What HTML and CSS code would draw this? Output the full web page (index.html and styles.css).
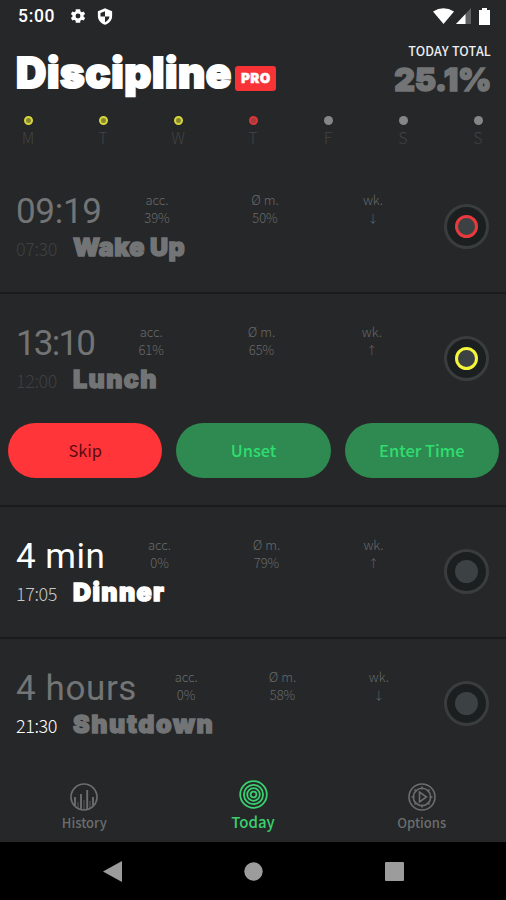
FILE: index.html
```html
<!DOCTYPE html>
<html lang="en">
<head>
<meta charset="utf-8">
<title>Discipline</title>
<link rel="stylesheet" href="styles.css">
</head>
<body>
<div class="phone">
  <div class="status">
    <span class="clock">5:00</span>
    <svg class="gear" width="18" height="18" viewBox="0 0 24 24" fill="#fff"><path d="M19.4 13a7.500 7.500 0 0 0 0-2l2.100-1.600-2-3.500-2.500 1a7.500 7.500 0 0 0-1.700-1L14.900 3H9.100l-.4 2.900a7.500 7.500 0 0 0-1.700 1l-2.500-1-2 3.500L4.600 11a7.500 7.500 0 0 0 0 2l-2.100 1.600 2 3.500 2.500-1a7.500 7.500 0 0 0 1.700 1l.4 2.900h5.800l.4-2.900a7.500 7.500 0 0 0 1.700-1l2.500 1 2-3.500zM12 15.300a3.300 3.300 0 1 1 0-6.600 3.300 3.300 0 0 1 0 6.600z"/></svg>
    <svg class="shield" width="18" height="19" viewBox="0 0 24 24"><path fill="#fff" d="M12 1 2.500 5v6c0 6 4 10.500 9.500 12 5.500-1.500 9.500-6 9.500-12V5z"/><path fill="#252728" d="M12 5v7h6c-.5 3.500-3 6.500-6 7.600V12H6V7.200z"/></svg>
    <span class="grow"></span>
    <svg width="21" height="16" viewBox="0 0 21 16"><path fill="#fff" d="M0 3.500Q10.500-3 21 3.500L10.500 16z"/></svg>
    <svg class="signal" width="15" height="16" viewBox="0 0 15 16"><path fill="#606162" d="M15 0v16H0z"/><path fill="#fff" d="M9.500 5.900V16H0z"/></svg>
    <svg class="battery" width="11" height="17" viewBox="0 0 11 17"><path fill="#fff" d="M3 0h5v2h3v15H0V2h3z"/></svg>
  </div>

  <header class="header">
    <div class="brand"><h1 class="title">Discipline</h1><span class="pro">PRO</span></div>
    <div class="total"><div class="total-label">TODAY TOTAL</div><div class="total-value">25.1%</div></div>
  </header>

  <div class="week">
    <div class="day"><i class="dot yellow"></i>M</div>
    <div class="day"><i class="dot yellow"></i>T</div>
    <div class="day"><i class="dot yellow"></i>W</div>
    <div class="day"><i class="dot red"></i>T</div>
    <div class="day"><i class="dot"></i>F</div>
    <div class="day"><i class="dot"></i>S</div>
    <div class="day"><i class="dot"></i>S</div>
  </div>

  <section class="row">
    <div class="main">
      <div class="info">
        <div class="top"><div class="time t1">09:19</div>
          <div class="stat">acc.<b>39%</b></div><div class="stat">Ø m.<b>50%</b></div><div class="stat">wk.<b class="arrow">↓</b></div></div>
        <div class="bottom"><span class="planned faint">07:30</span><span class="name n1">Wake Up</span></div>
      </div>
      <div class="ring"><i class="core red"></i></div>
    </div>
  </section>

  <section class="row">
    <div class="main">
      <div class="info">
        <div class="top"><div class="time t2">13:10</div>
          <div class="stat">acc.<b>61%</b></div><div class="stat">Ø m.<b>65%</b></div><div class="stat">wk.<b class="arrow">↑</b></div></div>
        <div class="bottom"><span class="planned faint">12:00</span><span class="name n2">Lunch</span></div>
      </div>
      <div class="ring"><i class="core yellow"></i></div>
    </div>
    <div class="actions">
      <button class="btn skip">Skip</button>
      <button class="btn">Unset</button>
      <button class="btn">Enter Time</button>
    </div>
  </section>

  <section class="row active">
    <div class="main">
      <div class="info">
        <div class="top"><div class="time t3">4 min</div>
          <div class="stat">acc.<b>0%</b></div><div class="stat">Ø m.<b>79%</b></div><div class="stat">wk.<b class="arrow">↑</b></div></div>
        <div class="bottom"><span class="planned">17:05</span><span class="name n3">Dinner</span></div>
      </div>
      <div class="ring"><i class="core"></i></div>
    </div>
  </section>

  <section class="row last">
    <div class="main">
      <div class="info">
        <div class="top"><div class="time t4">4 hours</div>
          <div class="stat">acc.<b>0%</b></div><div class="stat">Ø m.<b>58%</b></div><div class="stat">wk.<b class="arrow">↓</b></div></div>
        <div class="bottom"><span class="planned bright">21:30</span><span class="name n4">Shutdown</span></div>
      </div>
      <div class="ring"><i class="core"></i></div>
    </div>
  </section>

  <nav class="tabs">
    <div class="tab">
      <svg width="28" height="28" viewBox="0 0 28 28" fill="none" stroke="currentColor"><circle cx="14" cy="14" r="13" stroke-width="1.700"/><path stroke-width="1.900" d="M5 14v8.500M11 11v15M17.200 7v19M23 14v8.500"/><path d="M8 19v6M14 17v9M20 18v7" stroke-width=".7"/></svg>
      <span>History</span>
    </div>
    <div class="tab current">
      <svg width="29" height="29" viewBox="0 0 29 29" fill="none" stroke="currentColor" stroke-width="1.800"><circle cx="14.500" cy="14.500" r="13.300"/><circle cx="14.500" cy="14.500" r="9.600"/><circle cx="14.500" cy="14.500" r="6.300"/><circle cx="14.500" cy="14.500" r="2.900"/></svg>
      <span>Today</span>
    </div>
    <div class="tab">
      <svg width="28" height="28" viewBox="0 0 28 28" fill="none" stroke="currentColor" stroke-width="1.600"><circle cx="14" cy="14" r="13"/><circle cx="14" cy="14" r="8.700"/><path d="M11.500 9v10l7-5zM14 3.500v3M14 21.500v3M3.500 14h3M21.500 14h3M6.500 6.500l2 2M19.500 19.500l2 2M21.500 6.500l-2 2M8.500 19.500l-2 2"/></svg>
      <span>Options</span>
    </div>
  </nav>

  <div class="system">
    <svg width="19" height="21" viewBox="0 0 19 21"><path fill="#9c9c9c" d="M0 10.500 19 0v21z"/></svg>
    <svg width="19" height="19" viewBox="0 0 19 19"><circle fill="#9c9c9c" cx="9.500" cy="9.500" r="9.200"/></svg>
    <svg width="19" height="19" viewBox="0 0 19 19"><rect fill="#9c9c9c" width="19" height="19" rx="1"/></svg>
  </div>
</div>
</body>
</html>
```
FILE: styles.css
```css
* { box-sizing: border-box; }
body { margin: 0; background: #252728; font-family: "Noto Sans CJK JP", "Noto Sans", sans-serif; }
.phone { width: 506px; height: 900px; display: flex; flex-direction: column; overflow: hidden; background: #252728; color: #737475; }
svg { display: block; flex: none; }

.status { height: 32px; flex: none; display: flex; align-items: center; padding: 0 16px 0 18px; }
.clock { color: #fff; font: 500 17.500px/20px Roboto, sans-serif; width: 38px; letter-spacing: .7px; }
.gear { margin-left: 13px; }
.shield { margin-left: 9px; }
.grow { flex: 1; }
.signal { margin-left: 2px; }
.battery { margin-left: 8px; }

.header { height: 80px; flex: none; display: flex; justify-content: space-between; padding: 0 15px 0 16px; }
.brand { display: flex; align-items: flex-start; padding-top: 16px; }
.title { margin: 0; width: 219px; white-space: nowrap; color: #fff; font: 900 42px/50px Inter, sans-serif; letter-spacing: .6px; -webkit-text-stroke: 2px #fff; }
.pro { margin-top: 18px; width: 41px; height: 25px; border-radius: 3px; background: #f73338; color: #fff; font: 900 13px/24px Inter, sans-serif; letter-spacing: .8px; text-indent: 1px; -webkit-text-stroke: .6px #fff; text-align: center; }
.total { text-align: right; padding-top: 10px; }
.total-label { color: #eee; font-size: 12.500px; line-height: 17px; font-weight: 500; letter-spacing: .18px; }
.total-value { font: 900 32px/42px Inter, sans-serif; letter-spacing: -.3px; -webkit-text-stroke: 1.500px #737475; }

.week { height: 50px; flex: none; display: flex; justify-content: space-between; padding: 4px 18px 0; }
.day { width: 20px; display: flex; flex-direction: column; align-items: center; font-size: 16px; line-height: 18px; font-weight: 300; color: #414344; }
.dot { width: 9px; height: 9px; border-radius: 50%; background: #858687; margin-bottom: 3px; }
.dot.yellow { background: #85862e; border: 2px solid #d7d73c; }
.dot.red { background: #a63a3d; border: 2px solid #d7373b; }

.row { flex: none; border-bottom: 2px solid #191b1c; }
.main { height: 130px; display: flex; padding: 28px 17px 0 16px; }
.info { width: 411px; }
.top { height: 43px; display: flex; }
.time { flex: none; font: 400 35px/44px Roboto, sans-serif; white-space: nowrap; }
.t1 { width: 87px; letter-spacing: -.3px; }
.t2 { width: 80px; letter-spacing: -1.800px; }
.t3 { width: 90px; letter-spacing: .5px; }
.t4 { width: 122px; letter-spacing: .6px; }
.stat { flex: 1; display: flex; flex-direction: column; text-align: center; font-size: 13px; font-weight: 300; line-height: 18px; padding-top: 1px; color: #686a6b; }
.stat b { font-weight: inherit; }
.stat .arrow { font: 300 11px/18px "Noto Sans CJK JP", sans-serif; }
.bottom { display: flex; align-items: baseline; line-height: 28px; height: 28px; }
.planned { width: 57px; font-size: 18px; font-weight: 300; letter-spacing: -.4px; color: #c5c6c7; }
.faint { color: #3e4041; }
.bright { color: #fff; }
.name { font: 900 25px/28px Inter, sans-serif; white-space: nowrap; -webkit-text-stroke: 1.400px currentColor; }
.n1 { letter-spacing: .4px; }
.n2 { letter-spacing: 1.400px; }
.n3 { letter-spacing: 1.400px; }
.n4 { letter-spacing: 1.600px; }
.active .time, .active .name { color: #fff; }
.ring { width: 45px; height: 45px; margin: 14px 0 0 17px; border: 3px solid #3a3d3e; border-radius: 50%; background: #1b1f20; display: flex; align-items: center; justify-content: center; }
.core { width: 23px; height: 23px; border-radius: 50%; background: #3c4243; }
.core.red { border: 3px solid #e8393e; }
.core.yellow { border: 3px solid #f5f53b; }
.actions { display: flex; gap: 14px; padding: 0 7px 0 8px; height: 81px; margin-top: -1px; margin-bottom: 1px; }
.row:nth-of-type(2) { height: 213px; }
.btn { flex: 1; height: 55px; border: 0; border-radius: 28px; padding: 0; background: #2f8a51; color: #30dd70; font: 500 16.400px/55px "Noto Sans CJK JP", sans-serif; }
.skip { background: #ff3539; color: #5c0b10; font-weight: 400; }
.last { border: 0; }

.tabs { flex: 1; display: flex; color: #6b6d6e; padding-top: 1px; }
.tab { flex: 1; display: flex; flex-direction: column; align-items: center; padding-top: 13px; font-size: 13px; font-weight: 500; line-height: 23px; }
.current { padding-top: 10px; color: #3ad06f; font-size: 15px; line-height: 26px; }
.system { height: 58px; flex: none; background: #000; display: flex; align-items: center; justify-content: space-between; padding: 0 102px 0 103px; }
```
